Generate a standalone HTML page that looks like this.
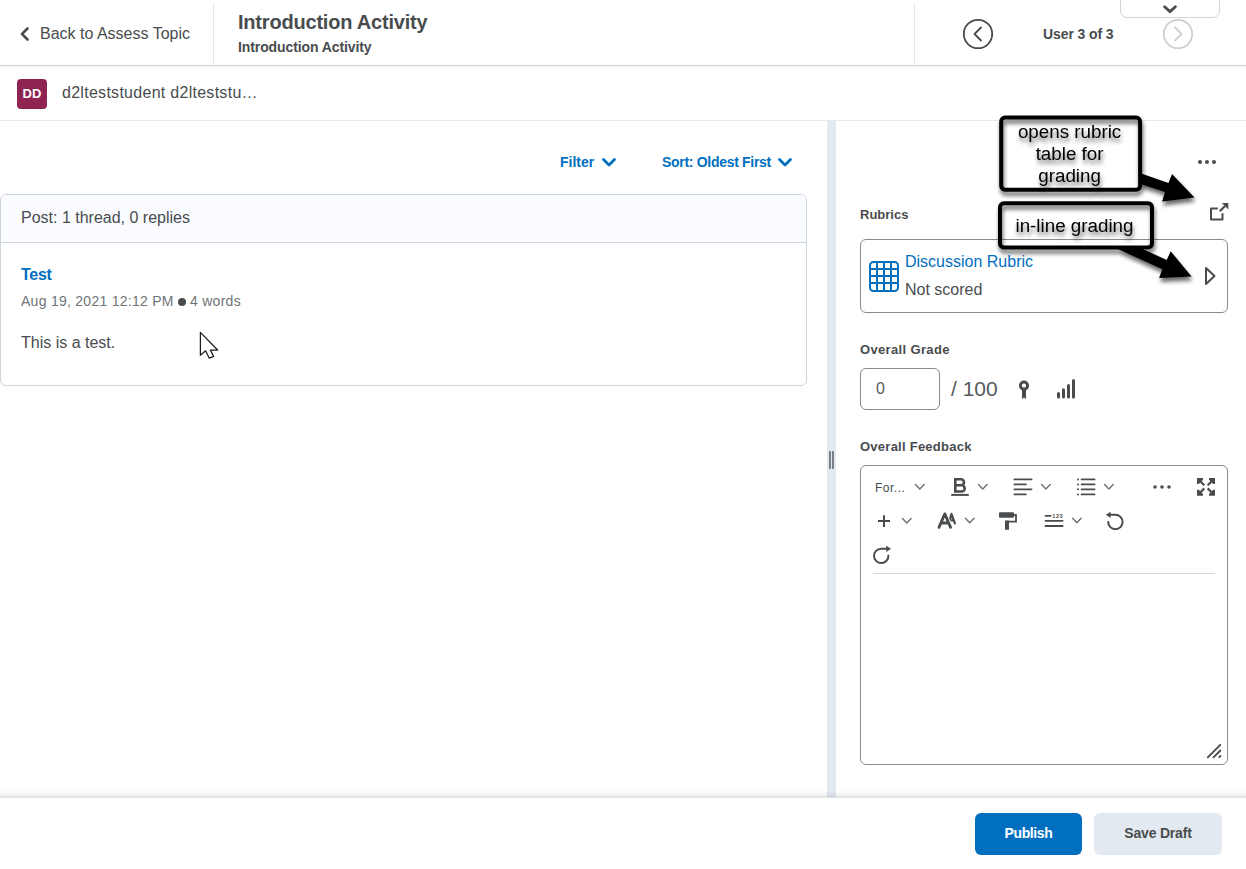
<!DOCTYPE html>
<html><head><meta charset="utf-8">
<style>
*{box-sizing:border-box;margin:0;padding:0}
html,body{width:1246px;height:869px;overflow:hidden;background:#fff;font-family:"Liberation Sans",sans-serif;color:#494c4e;position:relative}
.a{position:absolute;white-space:nowrap}
.line{position:absolute;background:#e3e9f1}
svg{position:absolute;overflow:visible}
</style></head><body>

<!-- header -->
<div class="line" style="left:0;top:65px;width:1246px;height:1px;background:#cdd5dc"></div>
<div class="line" style="left:0;top:66px;width:1246px;height:2px;background:#f6f7f9"></div>
<div class="line" style="left:213px;top:3px;width:1px;height:62px;background:#e3e9f1"></div>
<div class="line" style="left:914px;top:3px;width:1px;height:62px;background:#e3e9f1"></div>

<svg style="left:0;top:0" width="40" height="60"><path d="M27.5 28.5 L22 34 L27.5 39.5" fill="none" stroke="#494c4e" stroke-width="2.6" stroke-linecap="round" stroke-linejoin="round"/></svg>
<div class="a" style="left:40px;top:25px;font-size:16px;line-height:18px">Back to Assess Topic</div>

<div class="a" style="left:238px;top:11px;font-size:20px;line-height:22px;font-weight:bold;letter-spacing:-0.2px">Introduction Activity</div>
<div class="a" style="left:238px;top:39px;font-size:14px;line-height:16px;font-weight:bold;letter-spacing:-0.1px">Introduction Activity</div>

<svg style="left:962px;top:18px" width="32" height="32"><circle cx="16" cy="16" r="14.2" fill="none" stroke="#494c4e" stroke-width="1.8"/><path d="M19 9.5 L12.5 16 L19 22.5" fill="none" stroke="#494c4e" stroke-width="1.8" stroke-linecap="round" stroke-linejoin="round"/></svg>
<div class="a" style="left:1043px;top:26px;font-size:14px;line-height:16px;font-weight:bold;letter-spacing:-0.1px">User 3 of 3</div>
<svg style="left:1162px;top:18px" width="32" height="32"><circle cx="16" cy="16" r="14.2" fill="none" stroke="#cdcfd1" stroke-width="1.8"/><path d="M13 9.5 L19.5 16 L13 22.5" fill="none" stroke="#cdcfd1" stroke-width="1.8" stroke-linecap="round" stroke-linejoin="round"/></svg>

<div class="a" style="left:1120px;top:-6px;width:100px;height:24px;border:1px solid #cdd5dc;border-radius:0 0 7px 7px;background:#fff"></div>
<svg style="left:1160px;top:1px" width="20" height="16"><path d="M4.6 5.7 L10 10.6 L15.4 5.7" fill="none" stroke="#494c4e" stroke-width="2.8" stroke-linecap="round" stroke-linejoin="round"/></svg>

<!-- user row -->
<div class="a" style="left:17px;top:79px;width:30px;height:30px;border-radius:4px;background:#8f2453;color:#fff;font-weight:bold;font-size:13px;line-height:30px;text-align:center">DD</div>
<div class="a" style="left:62px;top:84px;font-size:16px;line-height:18px;letter-spacing:0.28px">d2lteststudent d2lteststu…</div>
<div class="line" style="left:0;top:120px;width:1246px;height:1px"></div>

<!-- splitter -->
<div class="line" style="left:827px;top:121px;width:9px;height:676px"></div>
<div class="line" style="left:829px;top:451px;width:2px;height:18px;background:#7c8085"></div>
<div class="line" style="left:832px;top:451px;width:2px;height:18px;background:#7c8085"></div>

<!-- left panel -->
<div class="a" style="left:560px;top:154px;font-size:14px;line-height:16px;font-weight:bold;color:#006fbf">Filter</div>
<svg style="left:600px;top:154px" width="20" height="16"><path d="M3.5 5.5 L9 11 L14.5 5.5" fill="none" stroke="#006fbf" stroke-width="2.8" stroke-linecap="round" stroke-linejoin="round"/></svg>
<div class="a" style="left:662px;top:154px;font-size:14px;line-height:16px;font-weight:bold;color:#006fbf;letter-spacing:-0.3px">Sort: Oldest First</div>
<svg style="left:776px;top:154px" width="20" height="16"><path d="M3.5 5.5 L9 11 L14.5 5.5" fill="none" stroke="#006fbf" stroke-width="2.8" stroke-linecap="round" stroke-linejoin="round"/></svg>

<div class="a" style="left:0;top:194px;width:807px;height:192px;border:1px solid #cdd5dc;border-radius:6px;overflow:hidden">
  <div style="position:absolute;left:0;top:0;width:805px;height:48px;background:#f9fbff;border-bottom:1px solid #cdd5dc"></div>
</div>
<div class="a" style="left:21px;top:209px;font-size:16px;line-height:18px">Post: 1 thread, 0 replies</div>
<div class="a" style="left:21px;top:266px;font-size:16px;line-height:18px;font-weight:bold;color:#006fbf;letter-spacing:-0.3px">Test</div>
<div class="a" style="left:21px;top:293px;font-size:14px;line-height:16px;color:#6e7477;letter-spacing:0.27px">Aug 19, 2021 12:12 PM</div>
<div class="a" style="left:178px;top:298px;width:8px;height:8px;border-radius:50%;background:#494c4e"></div>
<div class="a" style="left:190px;top:293px;font-size:14px;line-height:16px;color:#6e7477;letter-spacing:0.27px">4 words</div>
<div class="a" style="left:21px;top:334px;font-size:16px;line-height:18px">This is a test.</div>

<!-- cursor -->
<svg style="left:199px;top:331px" width="22" height="30"><path d="M1.4 1.4 L1.4 24.2 L6.6 19.8 L10.3 27.2 L14.6 25.4 L11.4 19 L18.6 19 Z" fill="#fff" stroke="#1a1a22" stroke-width="1.25" stroke-linejoin="round"/></svg>

<!-- right panel -->
<svg style="left:1195px;top:155px" width="24" height="14"><circle cx="5" cy="7" r="2" fill="#494c4e"/><circle cx="12" cy="7" r="2" fill="#494c4e"/><circle cx="19" cy="7" r="2" fill="#494c4e"/></svg>
<div class="a" style="left:860px;top:207px;font-size:13px;line-height:16px;font-weight:bold">Rubrics</div>
<svg style="left:0;top:0" width="1246" height="869"><path d="M1217.8 208.4 H1211 V219.6 H1222.5 V213.2" fill="none" stroke="#494c4e" stroke-width="2" stroke-linejoin="round"/><path d="M1219.8 211.2 L1225 206" fill="none" stroke="#494c4e" stroke-width="2.2"/><path d="M1221.8 202.9 L1228.3 202.9 L1228.3 209.4 Z" fill="#494c4e"/></svg>

<div class="a" style="left:860px;top:239px;width:368px;height:74px;border:1px solid #868c8f;border-radius:6px"></div>
<svg style="left:864px;top:256px" width="40" height="40"><rect x="6" y="6" width="28" height="29" rx="3.5" fill="none" stroke="#006fbf" stroke-width="2"/><path d="M13 6v29M20 6v29M27 6v29M6 13h28M6 20h28M6 27h28" stroke="#006fbf" stroke-width="2"/></svg>
<div class="a" style="left:905px;top:253px;font-size:16px;line-height:18px;color:#006fbf">Discussion Rubric</div>
<div class="a" style="left:905px;top:281px;font-size:16px;line-height:18px">Not scored</div>
<svg style="left:1200px;top:262px" width="24" height="28"><path d="M6 6 L14.5 14 L6 22 Z" fill="none" stroke="#494c4e" stroke-width="2" stroke-linejoin="round"/></svg>

<div class="a" style="left:860px;top:342px;font-size:13px;line-height:16px;font-weight:bold;letter-spacing:0.35px">Overall Grade</div>
<div class="a" style="left:860px;top:368px;width:80px;height:42px;border:1px solid #868c8f;border-radius:6px"></div>
<div class="a" style="left:876px;top:380px;font-size:16px;line-height:17px;color:#565a5d">0</div>
<div class="a" style="left:951px;top:378px;font-size:21px;line-height:22px;color:#565a5d">/ 100</div>
<svg style="left:1014px;top:377px" width="20" height="26"><circle cx="10" cy="8.6" r="3.6" fill="none" stroke="#494c4e" stroke-width="3"/><path d="M8 12 L8 22 L10 20.5 L12 22 L12 12 Z" fill="#494c4e"/></svg>
<svg style="left:1054px;top:376px" width="24" height="26"><path d="M4.5 17.5v3.4M9.5 13.7v7.2M14.5 9.5v11.4M19.5 4.6v16.3" stroke="#494c4e" stroke-width="3" stroke-linecap="round"/></svg>

<div class="a" style="left:860px;top:439px;font-size:13px;line-height:16px;font-weight:bold;letter-spacing:0.25px">Overall Feedback</div>
<div class="a" style="left:860px;top:465px;width:368px;height:300px;border:1px solid #868c8f;border-radius:6px"></div>
<div class="line" style="left:873px;top:573px;width:342px;height:1px;background:#d3d9e3"></div>

<!-- toolbar -->
<div class="a" style="left:875px;top:481px;font-size:12px;line-height:14px;color:#494c4e;letter-spacing:0.5px">For...</div>
<svg style="left:0;top:0" width="1246" height="869">
<g fill="none" stroke="#6b7074" stroke-width="1.4" stroke-linecap="round" stroke-linejoin="round">
<path d="M915.5 484.5 L919.8 489 L924.1 484.5"/>
<path d="M978.5 484.5 L982.8 489 L987.1 484.5"/>
<path d="M1041.6 484.5 L1045.9 489 L1050.2 484.5"/>
<path d="M1104.6 484.5 L1108.9 489 L1113.2 484.5"/>
<path d="M902.5 518.5 L906.8 523 L911.1 518.5"/>
<path d="M965.4 518.3 L969.7 522.8 L974 518.3"/>
<path d="M1072.6 518.3 L1076.9 522.8 L1081.2 518.3"/>
</g>
<g fill="none" stroke="#494c4e" stroke-linecap="round">
<path d="M955.3 479.3 H961 A3 3 0 0 1 961 485.3 H955.3 M955.3 485.3 H961.6 A3.1 3.1 0 0 1 961.6 491.5 H955.3 M955.3 478 V492.8" stroke-width="2.6" stroke-linecap="butt" stroke-linejoin="round"/>
<path d="M951.2 494.9 H968.8" stroke-width="2" stroke-linecap="butt"/>
<path d="M1014.4 479.4 H1031.6 M1014.4 484.4 H1025.8 M1014.4 489.3 H1031.6 M1014.4 494.4 H1025.8" stroke-width="1.8"/>
<path d="M1081.6 479.4 H1094.6 M1081.6 484.4 H1094.6 M1081.6 489.3 H1094.6 M1081.6 494.4 H1094.6" stroke-width="1.8"/>
<path d="M878 521 H890 M884 515.2 V527" stroke-width="2" stroke-linecap="butt"/>
<path d="M939 527.4 L944.8 513.9 L950.6 527.4 M941.3 523 H948.3" stroke-width="2.8" stroke-linejoin="round"/>
<path d="M950.2 518.6 L951.5 513.8 L954.9 523.4 M951.4 520.4 H953.6" stroke-width="2.2" stroke-linejoin="round"/>
<path d="M1045.5 515.8 H1050.6 M1045.5 520.8 H1062.6 M1045.5 526 H1062.6" stroke-width="1.8"/>
<path d="M1013.8 514.8 H1016 V521.6 H1007.2 V523" stroke-width="1.8" stroke-linecap="butt" stroke-linejoin="miter"/>
<path d="M1108.2 522 A7.2 7.2 0 1 0 1115.4 514.8 H1110" stroke-width="2"/>
<path d="M888.4 555.6 A7.2 7.2 0 1 1 881.1 548.7 H886" stroke-width="2"/>
</g>
<g fill="#494c4e">
<circle cx="1078" cy="479.4" r="1"/><circle cx="1078" cy="484.4" r="1"/><circle cx="1078" cy="489.3" r="1"/><circle cx="1078" cy="494.4" r="1"/>
<circle cx="1155" cy="487" r="1.8"/><circle cx="1162" cy="487" r="1.8"/><circle cx="1169" cy="487" r="1.8"/>
<rect x="999" y="512.2" width="15" height="5.5" rx="1"/>
<rect x="1005" y="520.6" width="4" height="9.2" rx="0.5"/>
<path d="M1105.8 514.8 L1110.6 511.7 L1110.6 517.9 Z"/>
<path d="M891 548.8 L886.2 545.7 L886.2 551.9 Z"/>
<path d="M1197 478 H1203 V479.8 L1198.8 484 H1197 Z M1215 478 H1209 V479.8 L1213.2 484 H1215 Z M1197 495.7 H1203 V493.9 L1198.8 489.7 H1197 Z M1215 495.7 H1209 V493.9 L1213.2 489.7 H1215 Z"/>
</g>
<g stroke="#494c4e" stroke-width="2.2" fill="none">
<path d="M1199.5 480.5 L1204.3 485.3 M1212.5 480.5 L1207.7 485.3 M1199.5 493.2 L1204.3 488.4 M1212.5 493.2 L1207.7 488.4"/>
</g>
<text x="1052.3" y="517.9" font-family="Liberation Sans" font-size="5.5" font-weight="bold" fill="#494c4e" letter-spacing="0.6">123</text>
</svg>

<!-- bottom -->
<div class="line" style="left:0;top:790px;width:1246px;height:8px;background:linear-gradient(rgba(0,0,0,0),rgba(0,0,0,0.04) 50%,rgba(0,0,0,0.12))"></div>
<svg style="left:0;top:0" width="1246" height="869"><path d="M1207.8 757.3 L1220.3 744.8 M1213.5 757.3 L1220.3 750.5 M1219.3 757.1 L1220.4 756" stroke="#494c4e" stroke-width="1.9" stroke-linecap="round"/></svg>
<div class="a" style="left:975px;top:813px;width:107px;height:42px;border-radius:6px;background:#006fbf;color:#fff;font-size:14px;line-height:41px;font-weight:bold;text-align:center;letter-spacing:-0.4px">Publish</div>
<div class="a" style="left:1094px;top:813px;width:128px;height:42px;border-radius:6px;background:#e3e9f1;color:#494c4e;font-size:14px;line-height:41px;font-weight:bold;text-align:center;letter-spacing:-0.2px">Save Draft</div>


<!-- annotations -->
<svg style="left:0;top:0" width="1246" height="869">
<defs><filter id="sh" x="-20%" y="-20%" width="140%" height="160%"><feGaussianBlur in="SourceAlpha" stdDeviation="2.2"/><feOffset dx="1" dy="3.5" result="b"/><feComponentTransfer><feFuncA type="linear" slope="0.6"/></feComponentTransfer><feMerge><feMergeNode/><feMergeNode in="SourceGraphic"/></feMerge></filter></defs>
<g filter="url(#sh)">
<rect x="1001.2" y="117.4" width="138.9" height="72.3" rx="4" fill="none" stroke="#000" stroke-width="4"/>
<rect x="1000" y="203.2" width="152" height="44.2" rx="4" fill="none" stroke="#000" stroke-width="4"/>
<polygon points="1141.9,173.8 1168.5,183.1 1172,174.1 1194.5,197.6 1162.1,201.6 1165,192.1 1141.9,184.4" fill="#000"/>
<polygon points="1115.6,248 1140.5,248 1166.7,259.9 1170.7,251.2 1191.6,276.5 1159.1,277.9 1162.4,269.3" fill="#000"/>
<g font-family="Liberation Sans" font-size="18.8" fill="#000" text-anchor="middle">
<text x="1069.6" y="137.5">opens rubric</text>
<text x="1069.6" y="159.5">table for</text>
<text x="1069.6" y="181.6">grading</text>
<text x="1074.5" y="231.7">in-line grading</text>
</g>
</g>
</svg>
</body></html>
